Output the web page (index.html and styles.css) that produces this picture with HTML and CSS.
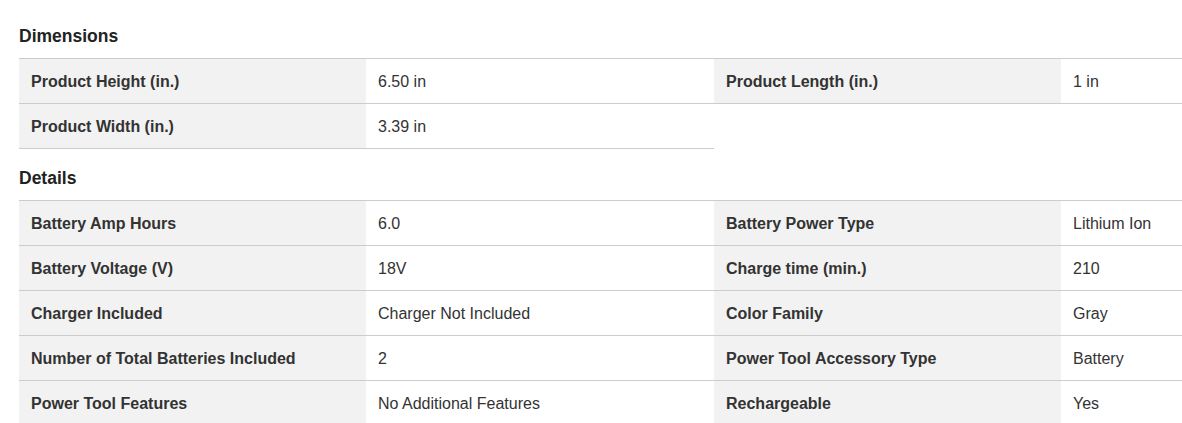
FILE: index.html
```html
<!DOCTYPE html>
<html>
<head>
    <title>Specifications</title>
    <meta charset="UTF-8">
    <link rel="stylesheet" href="styles.css">
</head>
<body>

<div class="specs">
    <h2>Dimensions</h2>
    <div class="spec-grid">
        <div class="spec-pair">
            <div class="spec-label">Product Height (in.)</div>
            <div class="spec-value">6.50 in</div>
        </div>
        <div class="spec-pair">
            <div class="spec-label">Product Length (in.)</div>
            <div class="spec-value">1 in</div>
        </div>
        <div class="spec-pair">
            <div class="spec-label">Product Width (in.)</div>
            <div class="spec-value">3.39 in</div>
        </div>
    </div>

    <h2>Details</h2>
    <div class="spec-grid">
        <div class="spec-pair">
            <div class="spec-label">Battery Amp Hours</div>
            <div class="spec-value">6.0</div>
        </div>
        <div class="spec-pair">
            <div class="spec-label">Battery Power Type</div>
            <div class="spec-value">Lithium Ion</div>
        </div>
        <div class="spec-pair">
            <div class="spec-label">Battery Voltage (V)</div>
            <div class="spec-value">18V</div>
        </div>
        <div class="spec-pair">
            <div class="spec-label">Charge time (min.)</div>
            <div class="spec-value">210</div>
        </div>
        <div class="spec-pair">
            <div class="spec-label">Charger Included</div>
            <div class="spec-value">Charger Not Included</div>
        </div>
        <div class="spec-pair">
            <div class="spec-label">Color Family</div>
            <div class="spec-value">Gray</div>
        </div>
        <div class="spec-pair">
            <div class="spec-label">Number of Total Batteries Included</div>
            <div class="spec-value">2</div>
        </div>
        <div class="spec-pair">
            <div class="spec-label">Power Tool Accessory Type</div>
            <div class="spec-value">Battery</div>
        </div>
        <div class="spec-pair">
            <div class="spec-label">Power Tool Features</div>
            <div class="spec-value">No Additional Features</div>
        </div>
        <div class="spec-pair">
            <div class="spec-label">Rechargeable</div>
            <div class="spec-value">Yes</div>
        </div>
    </div>
</div>

</body>
</html>
```

FILE: styles.css
```css
body {
    margin: 7px 0 0 19px;
    font-family: "Liberation Sans", Arial, Helvetica, sans-serif;
    font-size: 16px;
    color: #333;
    background: #fff;
    overflow: hidden;
}

h2 {
    margin: 0;
    padding: 19px 0 12px;
    font-size: 17.5px;
    line-height: 20px;
    font-weight: bold;
    color: #222;
}

.spec-grid {
    display: grid;
    grid-template-columns: 695px 1fr;
    border-top: 1px solid #ccc;
}

.spec-pair {
    display: grid;
    grid-template-columns: 347px 1fr;
    border-bottom: 1px solid #ccc;
}

.spec-label,
.spec-value {
    padding: 1px 12px 0;
    height: 43px;
    line-height: 44px;
    white-space: nowrap;
}

.spec-label {
    background-color: #f2f2f2;
    font-weight: bold;
}
```
